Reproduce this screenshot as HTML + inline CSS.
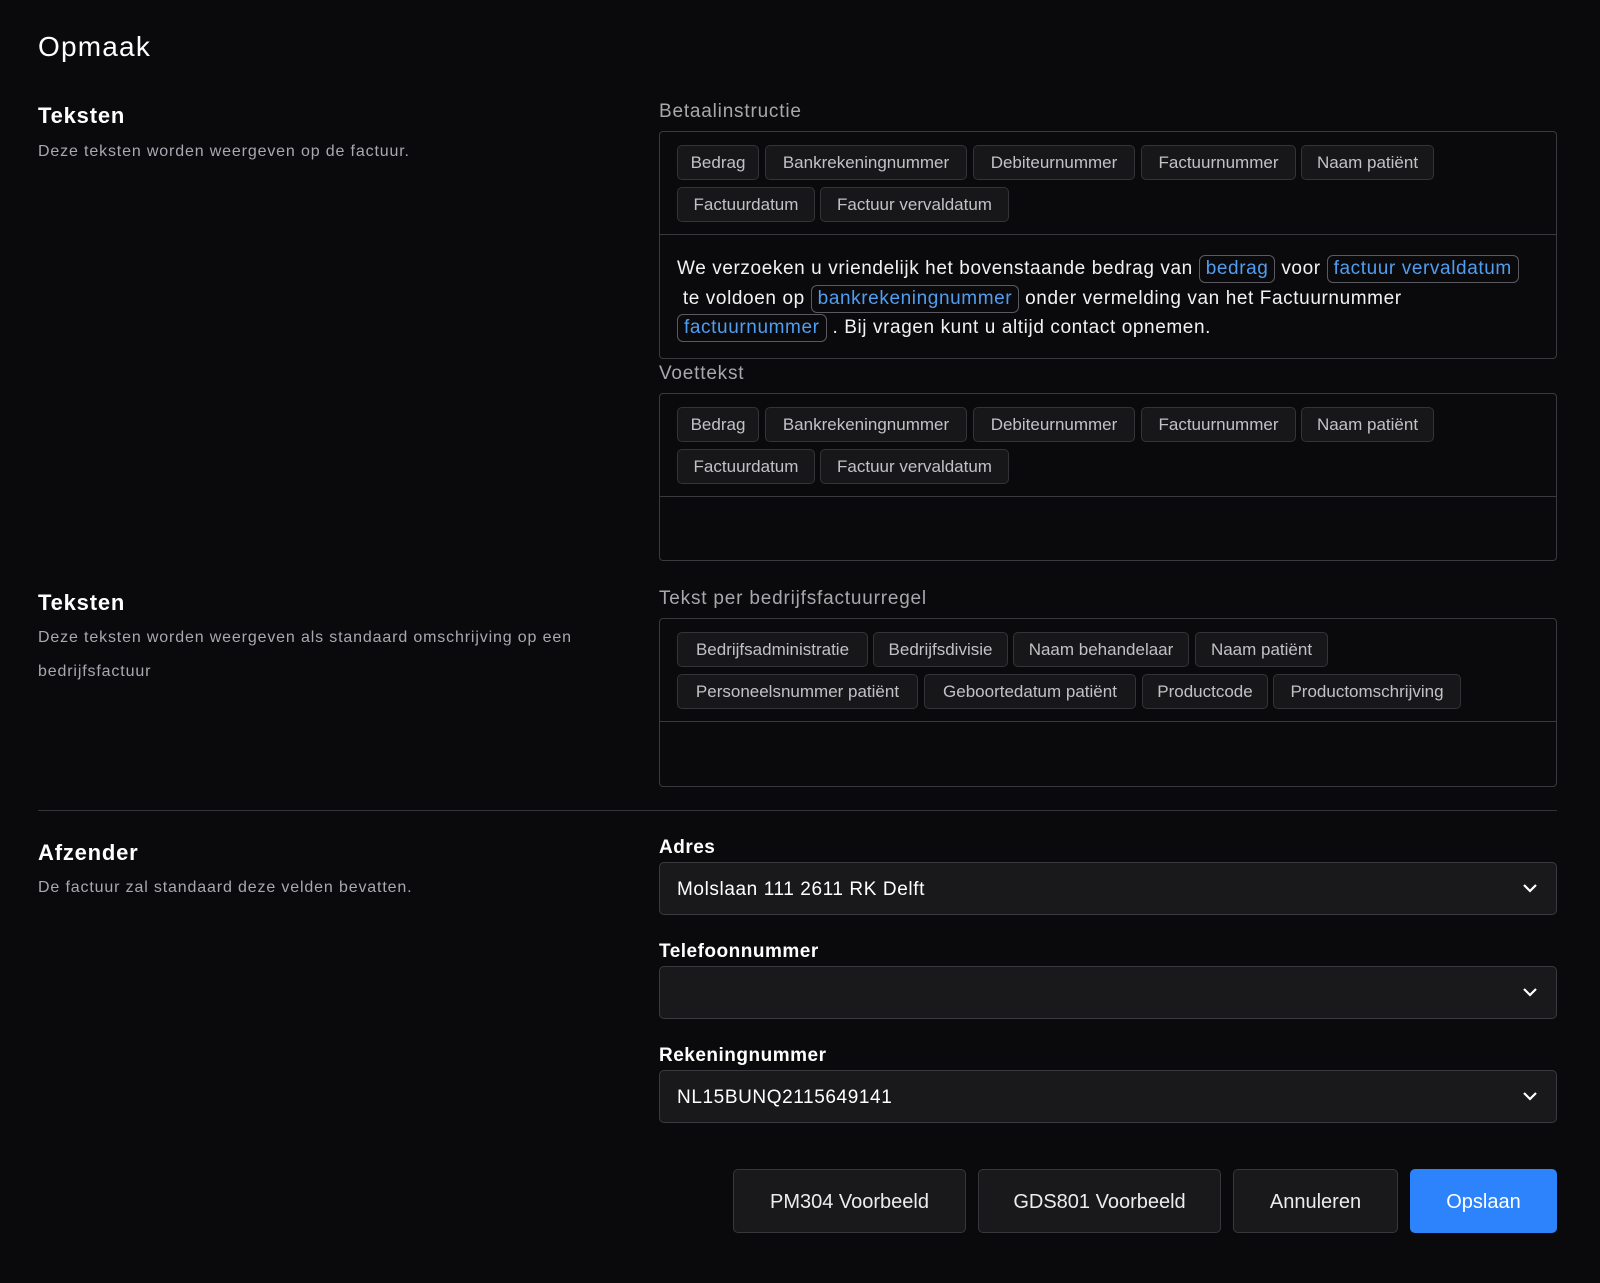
<!DOCTYPE html>
<html><head><meta charset="utf-8"><style>
*{box-sizing:border-box;margin:0;padding:0}
body{width:1600px;height:1283px;background:#0a0a0c;font-family:"Liberation Sans",sans-serif;color:#fff;position:relative;overflow:hidden}
.a{position:absolute;white-space:nowrap}
.h1{font-size:28px;left:38px;top:31px;letter-spacing:1.2px;font-weight:500}
.h2{font-size:22px;font-weight:bold;left:38px;letter-spacing:0.8px}
.d{font-size:16px;color:#a8a8b0;left:38px;letter-spacing:0.85px}
.lab{font-size:19px;color:#a8a8ac;left:659px;letter-spacing:0.8px}
.blab{font-size:19px;font-weight:bold;left:659px;letter-spacing:0.5px}
.box{position:absolute;left:659px;width:898px;border:1px solid #3a3a3e;border-radius:4px}
.sep{position:absolute;left:0;right:0;border-top:1px solid #3a3a3e}
.chip{position:absolute;height:35px;background:#17171a;border:1px solid #333338;border-radius:5px;color:#c2c2c6;font-size:17px;line-height:33px;text-align:center;white-space:nowrap}
.txt{position:absolute;left:17px;font-size:19px;line-height:29.5px;color:#f2f2f2;white-space:nowrap;letter-spacing:0.6px}
.tk{display:inline-block;border:1px solid #5a5a60;border-radius:6px;padding:0 6px;color:#4f9ef2;line-height:26px}
.sel{position:absolute;left:659px;width:898px;height:53px;background:#19191c;border:1px solid #3a3a3e;border-radius:5px;font-size:19px;line-height:53px;padding-left:17px;letter-spacing:0.6px}
.sel svg{position:absolute;right:18px;top:19px}
.btn{position:absolute;top:1169px;height:64px;background:#19191c;border:1px solid #38383c;border-radius:5px;font-size:20px;line-height:64px;text-align:center;color:#ececec}
</style></head><body>
<div class="a h1">Opmaak</div>
<div class="a h2" style="top:103px">Teksten</div>
<div class="a d" style="top:143px">Deze teksten worden weergeven op de factuur.</div>

<div class="a lab" style="top:101px">Betaalinstructie</div>
<div class="box" style="top:131px;height:228px">
<div class="chip" style="left:17px;top:13px;width:82px">Bedrag</div>
<div class="chip" style="left:105px;top:13px;width:202px">Bankrekeningnummer</div>
<div class="chip" style="left:313px;top:13px;width:162px">Debiteurnummer</div>
<div class="chip" style="left:481px;top:13px;width:155px">Factuurnummer</div>
<div class="chip" style="left:641px;top:13px;width:133px">Naam patiënt</div>
<div class="chip" style="left:17px;top:55px;width:138px">Factuurdatum</div>
<div class="chip" style="left:160px;top:55px;width:189px">Factuur vervaldatum</div>
<div class="sep" style="top:102px"></div>
<div class="txt" style="top:122px">We verzoeken u vriendelijk het bovenstaande bedrag van <span class="tk">bedrag</span> voor <span class="tk">factuur vervaldatum</span><br>&nbsp;te voldoen op <span class="tk">bankrekeningnummer</span> onder vermelding van het Factuurnummer<br><span class="tk">factuurnummer</span> . Bij vragen kunt u altijd contact opnemen.</div>
</div>

<div class="a lab" style="top:363px">Voettekst</div>
<div class="box" style="top:393px;height:168px">
<div class="chip" style="left:17px;top:13px;width:82px">Bedrag</div>
<div class="chip" style="left:105px;top:13px;width:202px">Bankrekeningnummer</div>
<div class="chip" style="left:313px;top:13px;width:162px">Debiteurnummer</div>
<div class="chip" style="left:481px;top:13px;width:155px">Factuurnummer</div>
<div class="chip" style="left:641px;top:13px;width:133px">Naam patiënt</div>
<div class="chip" style="left:17px;top:55px;width:138px">Factuurdatum</div>
<div class="chip" style="left:160px;top:55px;width:189px">Factuur vervaldatum</div>
<div class="sep" style="top:102px"></div>
</div>

<div class="a h2" style="top:590px">Teksten</div>
<div class="a d" style="top:621px;line-height:34px">Deze teksten worden weergeven als standaard omschrijving op een<br>bedrijfsfactuur</div>
<div class="a lab" style="top:588px">Tekst per bedrijfsfactuurregel</div>
<div class="box" style="top:618px;height:169px">
<div class="chip" style="left:17px;top:13px;width:191px">Bedrijfsadministratie</div>
<div class="chip" style="left:213px;top:13px;width:135px">Bedrijfsdivisie</div>
<div class="chip" style="left:353px;top:13px;width:176px">Naam behandelaar</div>
<div class="chip" style="left:535px;top:13px;width:133px">Naam patiënt</div>
<div class="chip" style="left:17px;top:55px;width:241px">Personeelsnummer patiënt</div>
<div class="chip" style="left:264px;top:55px;width:212px">Geboortedatum patiënt</div>
<div class="chip" style="left:482px;top:55px;width:126px">Productcode</div>
<div class="chip" style="left:613px;top:55px;width:188px">Productomschrijving</div>
<div class="sep" style="top:102px"></div>
</div>

<div style="position:absolute;left:38px;top:810px;width:1519px;border-top:1px solid #333338"></div>

<div class="a h2" style="top:840px">Afzender</div>
<div class="a d" style="top:879px">De factuur zal standaard deze velden bevatten.</div>

<div class="a blab" style="top:837px">Adres</div>
<div class="sel" style="top:862px">Molslaan 111 2611 RK Delft<svg width="16" height="12" viewBox="0 0 16 12"><path d="M2 3l6 6 6-6" stroke="#fff" stroke-width="2.2" fill="none"/></svg></div>
<div class="a blab" style="top:941px">Telefoonnummer</div>
<div class="sel" style="top:966px"><svg width="16" height="12" viewBox="0 0 16 12"><path d="M2 3l6 6 6-6" stroke="#fff" stroke-width="2.2" fill="none"/></svg></div>
<div class="a blab" style="top:1045px">Rekeningnummer</div>
<div class="sel" style="top:1070px">NL15BUNQ2115649141<svg width="16" height="12" viewBox="0 0 16 12"><path d="M2 3l6 6 6-6" stroke="#fff" stroke-width="2.2" fill="none"/></svg></div>

<div class="btn" style="left:733px;width:233px">PM304 Voorbeeld</div>
<div class="btn" style="left:978px;width:243px">GDS801 Voorbeeld</div>
<div class="btn" style="left:1233px;width:165px">Annuleren</div>
<div class="btn" style="left:1410px;width:147px;background:#2d83fb;border-color:#2d83fb;color:#fff">Opslaan</div>
</body></html>
